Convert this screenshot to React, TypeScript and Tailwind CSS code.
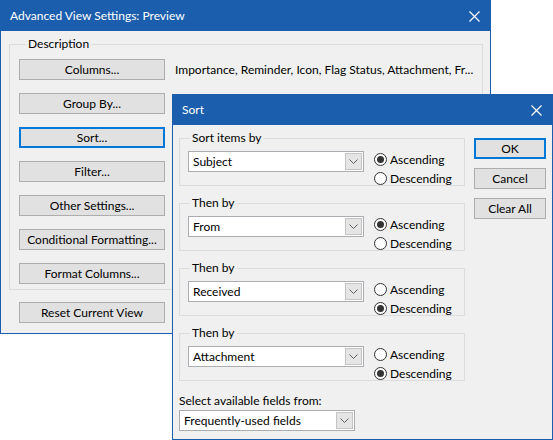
import React from 'react';

/**
 * Outlook "Advanced View Settings" with the Sort dialog on top of it.
 * The two windows sit at fixed spots on the desktop; everything inside
 * them is laid out by flow.
 */

const FONT = { fontFamily: '"Segoe UI", Lato, "Noto Sans", sans-serif' };

function CloseX() {
  return (
    <svg width="11" height="11" viewBox="0 0 11 11" className="text-white">
      <path d="M0.5 0.5 L10.5 10.5 M10.5 0.5 L0.5 10.5" stroke="currentColor" strokeWidth="1.2" />
    </svg>
  );
}

function TitleBar({ title }: { title: string }) {
  return (
    <div className="h-[30px] bg-[#1b5ead] flex items-center justify-between pl-[9px] pr-[10px] text-white text-[12px] shrink-0">
      <span>{title}</span>
      <CloseX />
    </div>
  );
}

function Button({ label, active, w = 'w-[146px]' }: { label: string; active?: boolean; w?: string }) {
  return (
    <div
      className={`${w} h-[21px] shrink-0 flex items-center justify-center bg-[#e1e1e1] text-[12px] text-black
                  ${active ? 'border-2 border-[#0078d7]' : 'border border-[#adadad]'}`}
    >
      {label}
    </div>
  );
}

function Combo({ value, w }: { value: string; w: string }) {
  return (
    <div className={`${w} h-[21px] shrink-0 bg-white border border-[#abadb3] flex items-center justify-between pl-[4px] pr-[1px]`}>
      <span className="text-[12px] text-black">{value}</span>
      <div className="w-[17px] h-[17px] bg-[#e5e5e5] border border-[#c4c4c4] flex items-center justify-center">
        <svg width="9" height="5" viewBox="0 0 9 5">
          <path d="M0.5 0.5 L4.5 4.5 L8.5 0.5" fill="none" stroke="#606060" strokeWidth="1" />
        </svg>
      </div>
    </div>
  );
}

function Radio({ label, checked }: { label: string; checked?: boolean }) {
  return (
    <div className="flex items-center gap-[3px] h-[19px]">
      <div className="w-[13px] h-[13px] rounded-full border border-[#333] bg-white flex items-center justify-center">
        {checked && <div className="w-[7px] h-[7px] rounded-full bg-[#333]" />}
      </div>
      <span className="text-[12px] text-black">{label}</span>
    </div>
  );
}

function SortGroup({ legend, value, desc }: { legend: string; value: string; desc?: boolean }) {
  return (
    <fieldset className="min-w-0 border border-[#dcdcdc] h-[56px] -mt-[2px] px-[8px] pt-[5px]">
      <legend className="text-[12px] text-black ml-[2px] px-[2px] leading-[16px]">{legend}</legend>
      <div className="flex items-start gap-[10px]">
        <Combo value={value} w="w-[176px]" />
        <div className="flex flex-col -mt-[1px]">
          <Radio label="Ascending" checked={!desc} />
          <Radio label="Descending" checked={desc} />
        </div>
      </div>
    </fieldset>
  );
}

const VIEW_BUTTONS = [
  'Group By...',
  'Sort...',
  'Filter...',
  'Other Settings...',
  'Conditional Formatting...',
  'Format Columns...',
];

export default function App() {
  return (
    <div className="relative w-[553px] h-[440px] bg-white overflow-hidden" style={FONT}>
      {/* Advanced View Settings */}
      <div className="absolute left-0 top-0 w-[491px] h-[334px] border border-[#1b5ead] bg-[#f0f0f0] flex flex-col">
        <TitleBar title="Advanced View Settings: Preview" />
        <div className="px-[8px] pt-[5px]">
          <fieldset className="min-w-0 border border-[#dcdcdc] w-[474px] h-[254px] px-[9px] pt-[7px]">
            <legend className="text-[12px] text-black ml-[7px] px-[2px] leading-[16px]">Description</legend>
            <div className="flex flex-col gap-[13px]">
              <div className="flex items-center gap-[10px]">
                <Button label="Columns..." />
                <span className="text-[12px] text-black whitespace-nowrap">
                  Importance, Reminder, Icon, Flag Status, Attachment, Fr...
                </span>
              </div>
              {VIEW_BUTTONS.map((b) => (
                <Button key={b} label={b} active={b === 'Sort...'} />
              ))}
            </div>
          </fieldset>
          <div className="pl-[10px] pt-[12px]">
            <Button label="Reset Current View" />
          </div>
        </div>
      </div>

      {/* Sort dialog */}
      <div className="absolute left-[172px] top-[94px] w-[381px] h-[346px] border border-[#1b5ead] bg-[#f0f0f0] flex flex-col">
        <TitleBar title="Sort" />
        <div className="flex gap-[9px] pl-[6px] pt-[7px]">
          <div className="w-[286px] flex flex-col gap-[11px]">
            <SortGroup legend="Sort items by" value="Subject" />
            <SortGroup legend="Then by" value="From" />
            <SortGroup legend="Then by" value="Received" desc />
            <SortGroup legend="Then by" value="Attachment" desc />
            <div className="flex flex-col gap-[1px] mt-[1px]">
              <span className="text-[12px] text-black leading-[16px]">Select available fields from:</span>
              <Combo value="Frequently-used fields" w="w-[176px]" />
            </div>
          </div>
          <div className="flex flex-col gap-[9px] pt-[6px]">
            <Button label="OK" active w="w-[72px]" />
            <Button label="Cancel" w="w-[72px]" />
            <Button label="Clear All" w="w-[72px]" />
          </div>
        </div>
      </div>
    </div>
  );
}
